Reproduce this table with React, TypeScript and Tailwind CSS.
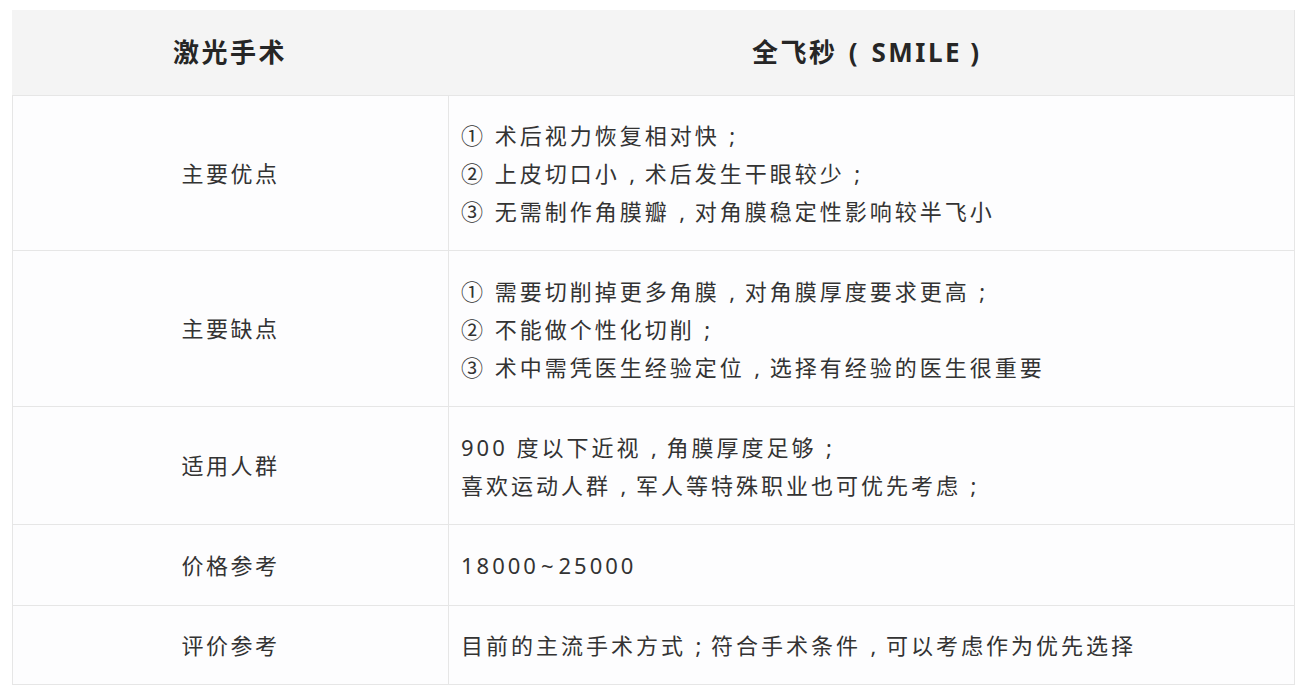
import React from 'react';

type Row = {
  label: string;
  lines: string[];
  height: string;
};

const rows: Row[] = [
  {
    label: '主要优点',
    lines: ['① 术后视力恢复相对快；', '② 上皮切口小，术后发生干眼较少；', '③ 无需制作角膜瓣，对角膜稳定性影响较半飞小'],
    height: 'h-[155px]',
  },
  {
    label: '主要缺点',
    lines: ['① 需要切削掉更多角膜，对角膜厚度要求更高；', '② 不能做个性化切削；', '③ 术中需凭医生经验定位，选择有经验的医生很重要'],
    height: 'h-[156px]',
  },
  {
    label: '适用人群',
    lines: ['900 度以下近视，角膜厚度足够；', '喜欢运动人群，军人等特殊职业也可优先考虑；'],
    height: 'h-[118px]',
  },
  {
    label: '价格参考',
    lines: ['18000~25000'],
    height: 'h-[81px]',
  },
  {
    label: '评价参考',
    lines: ['目前的主流手术方式；符合手术条件，可以考虑作为优先选择'],
    height: 'h-[79px]',
  },
];

// full-width punctuation drawn centred in its cell, like the source rendering
function Line({ text }: { text: string }) {
  const parts = text.split(/([，；~])/);
  return (
    <div>
      {parts.map((p, i) => {
        if (p === '，' || p === '；') {
          return (
            <span key={i} className="inline-block w-[25px] text-center tracking-normal">
              {p === '，' ? ',' : ';'}
            </span>
          );
        }
        if (p === '~') {
          return (
            <span key={i} className="mx-[2px]">
              ~
            </span>
          );
        }
        return <React.Fragment key={i}>{p}</React.Fragment>;
      })}
    </div>
  );
}

export default function App() {
  return (
    <div
      className="min-h-[694px] bg-white pt-[10px] pl-3 text-[#333]"
      style={{ fontFamily: '"Noto Sans", "Noto Sans CJK SC", sans-serif' }}
    >
      <div className="w-[1283px] border-r border-b border-[#e6e6e6]">
        {/* header */}
        <div className="grid h-[85px] grid-cols-[436px_1fr] bg-[#f4f4f4]">
          <div className="flex items-center justify-center text-[26px] font-bold tracking-[2.5px] text-[#262626]">
            激光手术
          </div>
          <div className="flex items-center justify-center text-[26px] font-bold tracking-[2.5px] text-[#262626]">
            全飞秒<span className="inline-block w-[34px] text-center">(</span>SMILE
            <span className="inline-block w-[28px] text-center">)</span>
          </div>
        </div>

        {rows.map((row) => (
          <div
            key={row.label}
            className={`grid grid-cols-[436px_1fr] border-t border-[#e6e6e6] bg-[#fdfdfe] ${row.height}`}
          >
            <div className="flex items-center justify-center border-l border-[#e6e6e6] text-[22px] tracking-[2.5px]">
              {row.label}
            </div>
            <div className="flex flex-col justify-center border-l border-[#e6e6e6] pl-3 text-[22px] leading-[38px] tracking-[3px]">
              {row.lines.map((line) => (
                <Line key={line} text={line} />
              ))}
            </div>
          </div>
        ))}
      </div>
    </div>
  );
}
